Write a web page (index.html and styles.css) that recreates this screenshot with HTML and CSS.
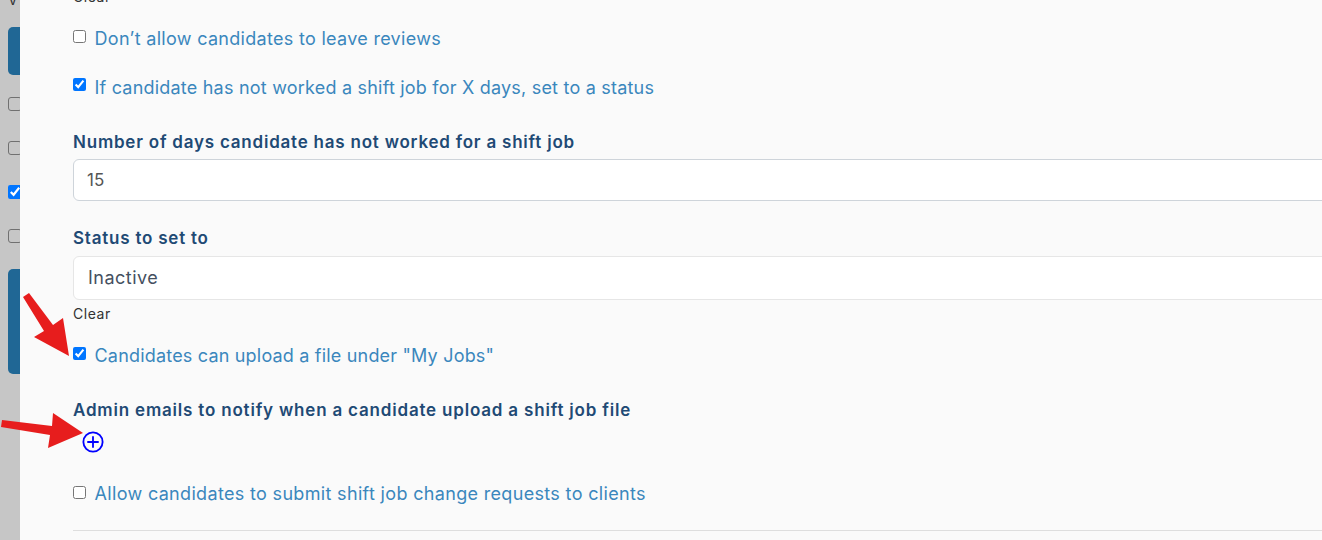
FILE: index.html
```html
<!DOCTYPE html>
<html lang="en">
<head>
<meta charset="utf-8">
<title>Settings</title>
<link rel="stylesheet" href="styles.css">
</head>
<body>
<div class="backdrop">
  <div class="back-label">V</div>
  <div class="back-btn back-btn-a"></div>
  <input class="back-check" type="checkbox">
  <input class="back-check" type="checkbox">
  <input class="back-check" type="checkbox" checked>
  <input class="back-check" type="checkbox">
  <div class="back-btn back-btn-b"></div>
</div>
<main class="panel">
  <div class="clear clear-top">Clear</div>
  <label class="check-row row-a"><input type="checkbox"><span>Don’t allow candidates to leave reviews</span></label>
  <label class="check-row row-b"><input type="checkbox" checked><span>If candidate has not worked a shift job for X days, set to a status</span></label>
  <div class="field-label label-days">Number of days candidate has not worked for a shift job</div>
  <div class="input input-days">15</div>
  <div class="field-label label-status">Status to set to</div>
  <div class="input input-status">Inactive</div>
  <div class="clear clear-status">Clear</div>
  <label class="check-row row-c"><input type="checkbox" checked><span>Candidates can upload a file under "My Jobs"</span></label>
  <div class="field-label label-emails">Admin emails to notify when a candidate upload a shift job file</div>
  <svg class="add-icon" width="22" height="22" viewBox="0 0 24 24" fill="none" stroke="#0000ff" stroke-width="2" stroke-linecap="round"><circle cx="12" cy="12" r="10.5"/><path d="M12 6.5v11M6.5 12h11"/></svg>
  <label class="check-row row-d"><input type="checkbox"><span>Allow candidates to submit shift job change requests to clients</span></label>
  <hr class="rule">
</main>
<svg class="arrows" width="100" height="170" viewBox="0 0 100 170" fill="#e71d1d">
  <polygon points="23,7 29,3 53,35 63,28 69,66 34,47 44,41"/>
  <polygon points="2,130 52,136 53,123 83,143 48,158 50,145 1,137"/>
</svg>
</body>
</html>
```
FILE: styles.css
```css
html, body {
  margin: 0;
  height: 100%;
  overflow: hidden;
}
body {
  position: relative;
  width: 1322px;
  height: 540px;
  background: #c6c6c6;
  font-family: Inter, "Open Sans", sans-serif;
  display: flex;
}
.backdrop {
  width: 20px;
  flex: none;
  overflow: hidden;
  padding-left: 8px;
  box-sizing: border-box;
}
.back-label {
  height: 27px;
  margin-top: -14px;
  padding-top: 14px;
  font-size: 14px;
  line-height: 0;
  color: #333;
}
.back-btn {
  width: 60px;
  background: #206795;
  border-radius: 5px;
}
.back-btn-a { height: 48px; margin-bottom: 22px; }
.back-btn-b { height: 105px; margin-top: 26px; }
.back-check {
  display: block;
  margin: 0;
  width: 14px;
  height: 14px;
}
.back-check:not(:checked) {
  appearance: none;
  box-sizing: border-box;
  background: #c6c6c6;
  border: 1px solid #707070;
  border-radius: 3px;
}
.back-check + .back-check { margin-top: 30px; }
.panel {
  flex: 1;
  min-width: 0;
  background: #fafafa;
  padding-left: 53px;
  overflow: hidden;
}
.clear {
  font-size: 14px;
  letter-spacing: 0.55px;
  line-height: 18px;
  color: #333;
}
.clear-top { margin-top: -12px; height: 18px; }
.check-row {
  display: flex;
  align-items: center;
  gap: 8.5px;
  height: 24px;
  font-size: 18px;
  letter-spacing: 0.3px;
  color: #3a87bd;
  white-space: nowrap;
}
.check-row input {
  width: 13px;
  height: 13px;
  margin: 0;
  flex: none;
  position: relative;
  top: -2px;
}
.row-a { margin-top: 20px; }
.row-b { margin-top: 25px; letter-spacing: 0.21px; }
.row-b input { top: -3px; }
.field-label {
  font-size: 17px;
  font-weight: 600;
  letter-spacing: 0.78px;
  line-height: 22px;
  color: #1f4a75;
  white-space: nowrap;
}
.label-days { margin-top: 32px; }
.input {
  width: 1300px;
  box-sizing: border-box;
  background: #fff;
  border-radius: 6px;
  padding-left: 14px;
  display: flex;
  align-items: center;
}
.input-days {
  height: 42px;
  margin-top: 6px;
  padding-left: 13px;
  border: 1px solid #ced4da;
  font-size: 17px;
  color: #555;
}
.label-status { margin-top: 26px; }
.input-status {
  height: 44px;
  margin-top: 7px;
  padding-bottom: 2px;
  border: 1px solid #e6e6e6;
  font-size: 18px;
  letter-spacing: 0.5px;
  color: #45505f;
}
.clear-status { margin-top: 5px; }
.row-c { margin-top: 20px; letter-spacing: 0.19px; }
.label-emails { margin-top: 32px; letter-spacing: 0.81px; }
.add-icon {
  display: block;
  margin: 10px 0 0 9px;
}
.row-d { margin-top: 28px; letter-spacing: 0.33px; }
.row-d input { top: -1px; }
.rule {
  margin: 25px 0 0;
  border: 0;
  border-top: 1px solid #dedede;
  width: 1300px;
}
.arrows {
  position: absolute;
  left: 0;
  top: 290px;
}
```
